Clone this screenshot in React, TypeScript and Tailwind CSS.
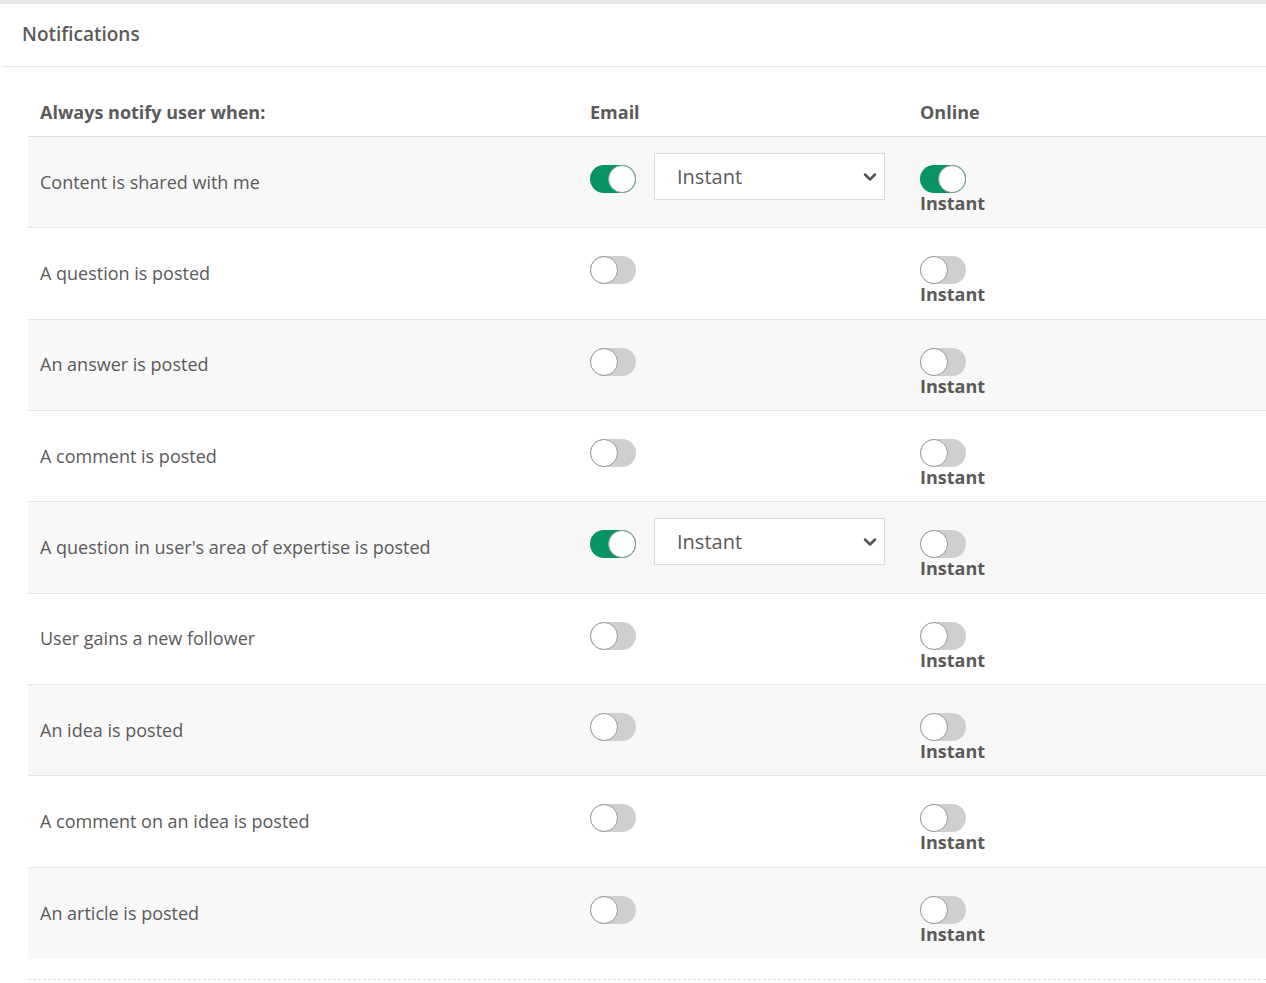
import { FC } from "react";
import { ChevronDown } from "lucide-react";

interface Row {
  label: string;
  email: boolean;
  online: boolean;
}

const rows: Row[] = [
  { label: "Content is shared with me", email: true, online: true },
  { label: "A question is posted", email: false, online: false },
  { label: "An answer is posted", email: false, online: false },
  { label: "A comment is posted", email: false, online: false },
  { label: "A question in user's area of expertise is posted", email: true, online: false },
  { label: "User gains a new follower", email: false, online: false },
  { label: "An idea is posted", email: false, online: false },
  { label: "A comment on an idea is posted", email: false, online: false },
  { label: "An article is posted", email: false, online: false },
];

const Toggle = ({ on }: { on: boolean }) => (
  <span
    className={
      on
        ? "relative block w-[46px] h-[28px] rounded-full bg-[#079363] shrink-0"
        : "relative block w-[46px] h-[28px] rounded-full bg-[#cfcfcf] shrink-0"
    }
  >
    <span
      className={
        on
          ? "absolute top-0 right-0 w-[28px] h-[28px] rounded-full bg-white border border-[#8a9a92]"
          : "absolute top-0 left-0 w-[28px] h-[28px] rounded-full bg-white border border-[#999]"
      }
    />
  </span>
);

const Select = () => (
  <div className="mt-[16px] ml-[18px] w-[231px] h-[47px] bg-white border border-[#dcdcdc] flex items-center justify-between pl-[22px] pr-[4px]">
    <span className="text-[20px]">Instant</span>
    <ChevronDown size={20} strokeWidth={3} className="text-[#555]" />
  </div>
);

const NotificationRow: FC<{ row: Row; index: number; last: boolean }> = ({
  row,
  index,
  last,
}) => (
  <div
    className={
      "grid grid-cols-[562px_330px_1fr] h-[91.33px] " +
      (index % 2 === 0 ? "bg-[#f8f8f8] " : "bg-white ") +
      (last ? "" : "border-b border-[#e6e6e6]")
    }
  >
    <div className="pl-[12px] flex items-center text-[18px]">{row.label}</div>
    <div className="flex items-start">
      <div className="mt-[28px]">
        <Toggle on={row.email} />
      </div>
      {row.email && <Select />}
    </div>
    <div className="pt-[28px] flex flex-col items-start">
      <Toggle on={row.online} />
      <span className="font-bold text-[18px] leading-[21px]">Instant</span>
    </div>
  </div>
);

export default function App() {
  return (
    <div className="min-h-screen bg-white font-['Open_Sans',sans-serif] text-[#5a5a5a]">
      <div className="h-[4px] bg-[#e6e9ec]" />
      <div className="ml-[2px] h-[63px] border-b border-[#e6e6e6] flex items-center pl-[20px] pb-[1px]">
        <h2 className="text-[19px] font-semibold">Notifications</h2>
      </div>

      <div className="pl-[28px] pt-[28px]">
        <div className="grid grid-cols-[562px_330px_1fr] h-[42px] border-b border-[#dcdcdc] pt-[5px] text-[18px] leading-[24px] font-bold">
          <div className="pl-[12px]">Always notify user when:</div>
          <div>Email</div>
          <div>Online</div>
        </div>

        {rows.map((row, i) => (
          <NotificationRow
            key={row.label}
            row={row}
            index={i}
            last={i === rows.length - 1}
          />
        ))}

        <div className="mt-[20px] border-t border-dashed border-[#dedede]" />
      </div>
    </div>
  );
}
